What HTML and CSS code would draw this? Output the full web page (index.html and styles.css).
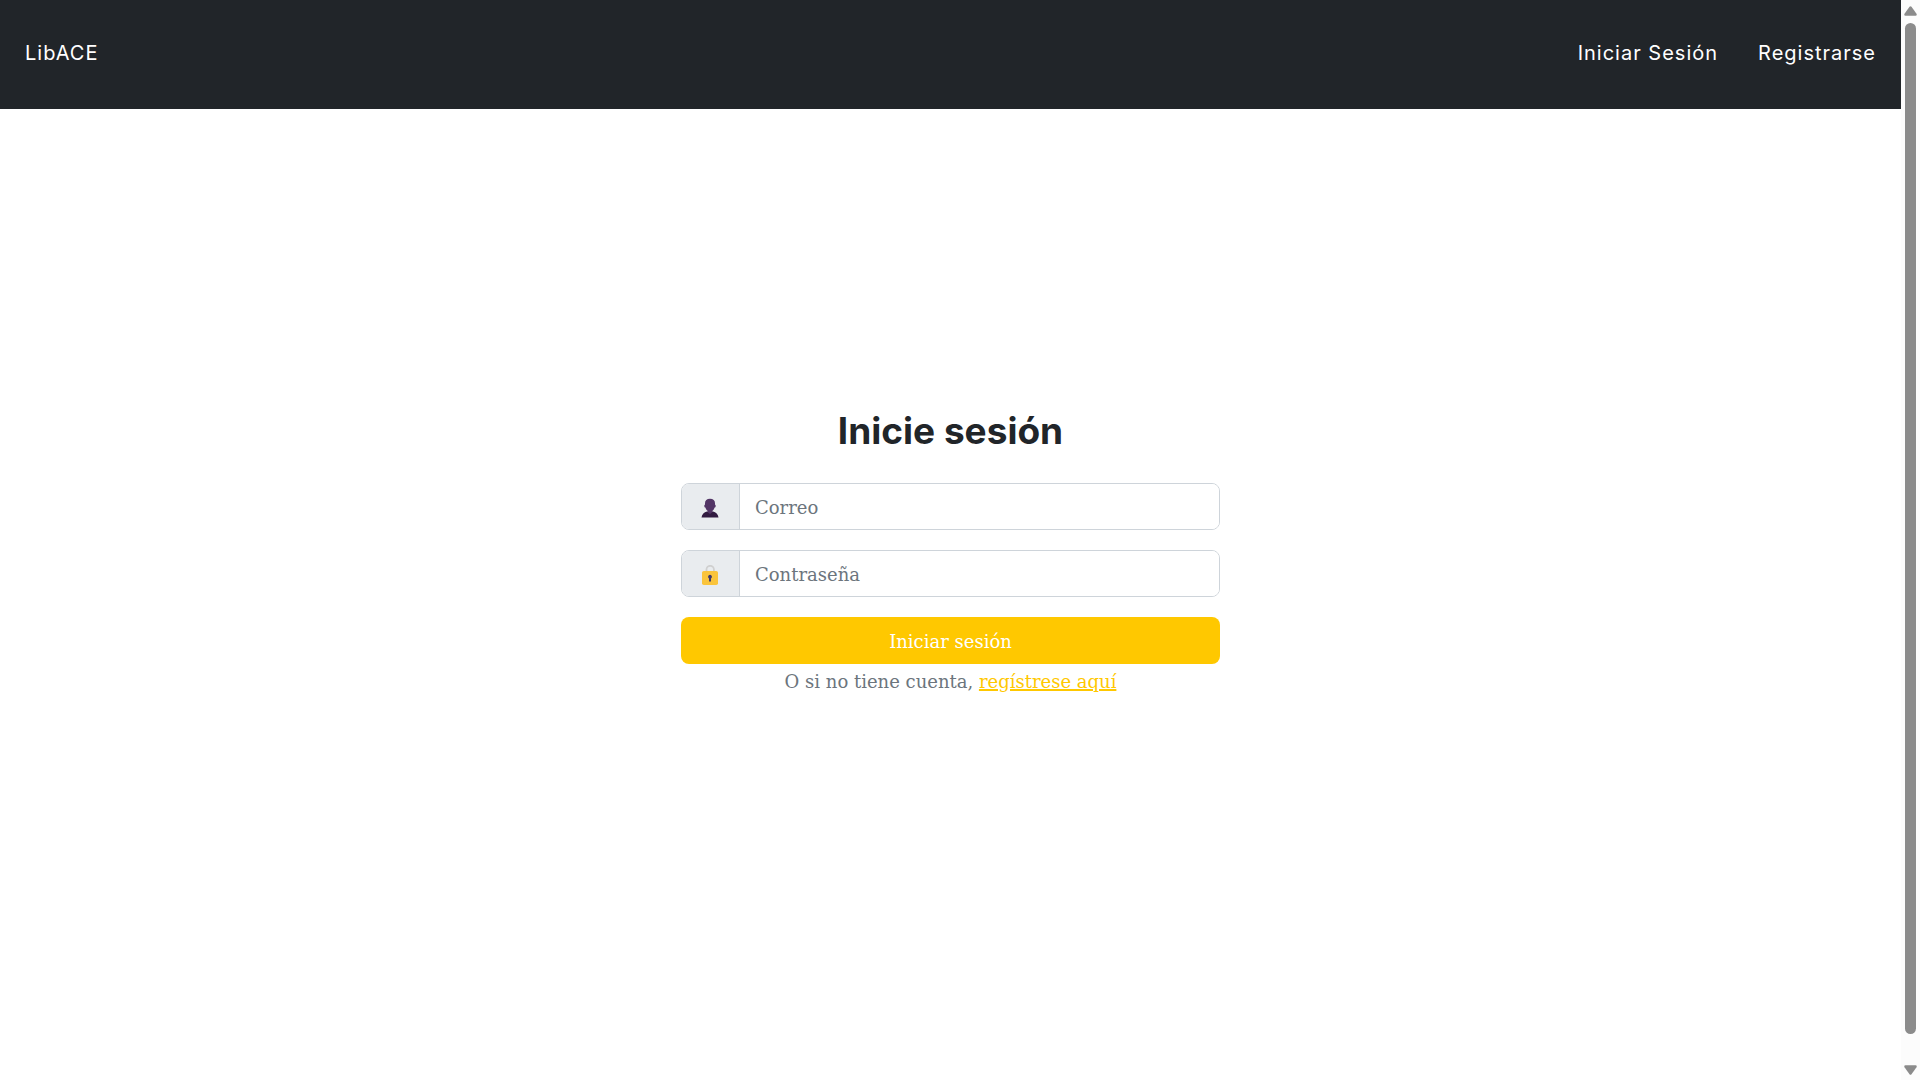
FILE: index.html
```html
<!DOCTYPE html>
<html lang="es">
<head>
<meta charset="utf-8">
<meta name="viewport" content="width=device-width, initial-scale=1">
<title>LibACE</title>
<link rel="stylesheet" href="styles.css">
</head>
<body>
<div class="page">
  <nav class="navbar">
    <a class="nav-link" href="#">LibACE</a>
    <div class="nav-links">
      <a class="nav-link" href="#">Iniciar Sesión</a>
      <a class="nav-link" href="#">Registrarse</a>
    </div>
  </nav>
  <main class="main">
    <form class="login">
      <h1 class="title">Inicie sesión</h1>
      <div class="field">
        <label class="field-icon" for="correo" aria-label="Correo">
          <svg width="18" height="20" viewBox="0 0 18 20" aria-hidden="true">
            <path fill="#321b41" d="M0.500 19.500C1 16 3 14 6 13.500h6c3 .5 5 2.500 5.500 6z"/>
            <path fill="#533566" d="M9 .8c3.200 0 5 1.700 5 4.500v1.500c1 0 1 2.400-.4 2.700-.4 1.600-1.200 2.800-2.300 3.600v1.200L9 16l-2.300-1.700v-1.200C5.600 12.300 4.800 11.100 4.400 9.500 3 9.200 3 6.800 4 6.800V5.300C4 2.500 5.800.8 9 .8z"/>
          </svg>
        </label>
        <input class="field-input" id="correo" type="email" placeholder="Correo">
      </div>
      <div class="field">
        <label class="field-icon" for="clave" aria-label="Contraseña">
          <svg width="18" height="20" viewBox="0 0 18 20" aria-hidden="true">
            <path fill="none" stroke="#d0d0d0" stroke-width="1.800" d="M5.500 7.500V4.500a3.700 3.700 0 0 1 7.400 0v3"/>
            <rect x="1" y="6" width="16" height="14" rx="1.800" fill="#fac43c"/>
            <path fill="#433b6b" d="M9 9.800a2 2 0 0 1 1 3.700v3H8v-3a2 2 0 0 1 1-3.700z"/>
          </svg>
        </label>
        <input class="field-input" id="clave" type="password" placeholder="Contraseña">
      </div>
      <button class="submit" type="submit">Iniciar sesión</button>
      <p class="hint">O si no tiene cuenta, <a class="hint-link" href="#">regístrese aquí</a></p>
    </form>
  </main>
</div>
<div class="scrollbar" aria-hidden="true">
  <svg width="13" height="10" viewBox="0 0 13 10"><path fill="#8b8b8b" d="M5.500.8q1-1.200 2 0l5 7q.8 1.700-1 1.900H1.500Q-.3 9.500.5 7.800z"/></svg>
  <div class="scroll-track"><div class="scroll-thumb"></div></div>
  <svg width="13" height="10" viewBox="0 0 13 10"><path fill="#8b8b8b" d="M5.500 9.200q1 1.200 2 0l5-7q.8-1.700-1-1.900H1.500Q-.3.5.5 2.200z"/></svg>
</div>
</body>
</html>
```
FILE: styles.css
```css
*,
*::before,
*::after {
  box-sizing: border-box;
}

body {
  margin: 0;
  display: flex;
  min-height: 100vh;
  background: #fff;
  color: #212529;
  font-family: "DejaVu Serif", serif;
  font-size: 18px;
  line-height: 32px;
}

.page {
  flex: 1;
  display: flex;
  flex-direction: column;
}

.navbar {
  display: flex;
  align-items: center;
  justify-content: space-between;
  padding: 37px 25px 40px;
  background: #212529;
}

.nav-links {
  display: flex;
  gap: 40px;
}

.nav-link {
  color: #fff;
  font-family: Inter, sans-serif;
  font-size: 20px;
  letter-spacing: 1px;
  text-decoration: none;
}

.main {
  flex: 1;
  display: flex;
  align-items: center;
  justify-content: center;
  padding: 0 20px 83px;
}

.login {
  width: 100%;
  max-width: 539px;
  display: flex;
  flex-direction: column;
}

.title {
  margin: 0 0 30px;
  font-family: Inter, sans-serif;
  font-size: 37px;
  font-weight: 700;
  line-height: 44px;
  text-align: center;
}

.field {
  display: flex;
  height: 47px;
  margin-bottom: 20px;
  border: 1px solid #ced4da;
  border-radius: 8px;
  overflow: hidden;
}

.field-icon {
  display: flex;
  align-items: center;
  justify-content: center;
  width: 58px;
  padding: 3px 2px 0 0;
  background: #e9ecef;
  border-right: 1px solid #ced4da;
}

.field-input {
  flex: 1;
  min-width: 0;
  padding: 3px 15px 0;
  border: 0;
  background: #fff;
  color: #212529;
  font: inherit;
}

.field-input::placeholder {
  color: #6c757d;
  opacity: 1;
}

.submit {
  height: 47px;
  padding: 3px 15px 0;
  border: 0;
  border-radius: 8px;
  background: #ffc800;
  color: #fff;
  font: inherit;
}

.hint {
  margin: 2px 0 0;
  color: #6c757d;
  text-align: center;
}

.hint-link {
  color: #ffc800;
  text-decoration-thickness: 2px;
}

.scrollbar {
  position: sticky;
  top: 0;
  display: flex;
  flex-direction: column;
  align-items: center;
  gap: 7px;
  width: 19px;
  height: 100vh;
  padding: 6px 0 5px;
  background: #fcfcfc;
}

.scroll-track {
  flex: 1;
  width: 11px;
}

.scroll-thumb {
  height: calc(100% - 24px);
  border-radius: 6px;
  background: #8b8b8b;
}
```
